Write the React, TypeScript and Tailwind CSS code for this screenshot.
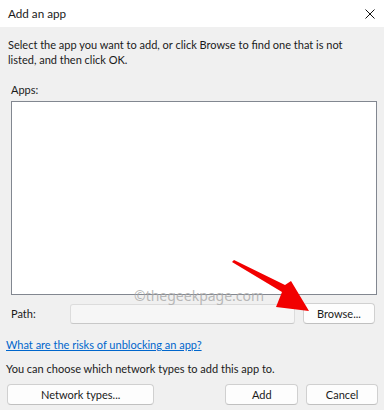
import React from 'react';

const btn =
  'h-[21px] rounded-[4px] border border-[#d0d0d0] border-b-[#c0c0c0] bg-[#fdfdfd] text-[11px] text-[#1a1a1a] flex items-center justify-center';

export default function App() {
  return (
    <div
      className="relative w-[384px] h-[410px] bg-[#f0f0f0] overflow-hidden text-[#1a1a1a]"
      style={{ fontFamily: 'Lato, "Noto Sans", Arial, sans-serif' }}
    >
      {/* Title bar */}
      <div className="h-[27px] bg-white flex items-center justify-between pl-[8px] pr-[8px]">
        <span className="text-[11.7px] leading-none">Add an app</span>
        <svg width="10" height="10" viewBox="0 0 10 10" className="mr-[1px]">
          <path d="M0.5 0.5 L9.5 9.5 M9.5 0.5 L0.5 9.5" stroke="#111" strokeWidth="1" />
        </svg>
      </div>

      {/* Body */}
      <div className="px-[6px] pt-[10px] text-[11px] leading-[15px]">
        <p className="ml-[2px] w-[350px]">
          Select the app you want to add, or click Browse to find one that is not listed, and then click OK.
        </p>

        <div className="ml-[5px] mt-[15px]">Apps:</div>
        <div className="ml-[5px] mt-[4px] w-[366px] h-[194px] border border-[#828790] bg-white" />

        <div className="ml-[5px] mt-[8px] flex items-center">
          <span className="w-[59px]">Path:</span>
          <div className="w-[225px] h-[20px] rounded-[3px] border border-[#dcdcdc] border-b-[#c8c8c8] bg-[#f6f6f6]" />
          <button className={`${btn} ml-[8px] w-[72px] h-[20px]`}>Browse...</button>
        </div>

        <a href="#" className="block mt-[13px] text-[#0066cc] underline">
          What are the risks of unblocking an app?
        </a>
        <div className="mt-[9px]">You can choose which network types to add this app to.</div>

        <div className="mt-[8px] flex items-center">
          <button className={`${btn} ml-[1px] w-[148px]`}>Network types...</button>
          <button className={`${btn} ml-[71px] w-[73px] border-[#0067c0] border-b-[#0067c0]`}>Add</button>
          <button className={`${btn} ml-[8px] w-[72px]`}>Cancel</button>
        </div>
      </div>

      {/* Watermark */}
      <div
        className="absolute left-[134px] top-[286px] text-[14px] leading-[20px] text-[#a8a8a8]/80"
        style={{ fontFamily: '"Noto Sans", sans-serif' }}
      >
        ©thegeekpage.com
      </div>

      {/* Red arrow */}
      <svg className="absolute left-0 top-0" width="384" height="410" viewBox="0 0 384 410">
        <polygon
          points="232,262 234,260 285,285 291,281 309,311 276,307 282,292"
          fill="#f20000"
        />
      </svg>
    </div>
  );
}
